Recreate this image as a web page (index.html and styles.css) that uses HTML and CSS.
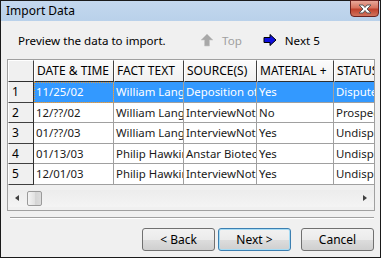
FILE: index.html
```html
<!DOCTYPE html>
<html lang="en">
<head>
    <meta charset="UTF-8">
    <title>Import Data</title>
    <link rel="stylesheet" href="styles.css">
</head>
<body>

<div class="window">
    <div class="titlebar">
        <span class="title">Import Data</span>
        <span class="close">
            <svg width="16" height="10" viewBox="0 0 16 10">
                <path d="M2 1 L6 1 L8 3.5 L10 1 L14 1 L10 5 L14 9 L10 9 L8 6.5 L6 9 L2 9 L6 5 Z" fill="#fff" stroke="#5a5a5a" stroke-width="1"/>
            </svg>
        </span>
    </div>

    <div class="content">
        <div class="toolbar">
            <span class="hint">Preview the data to import.</span>
            <span class="nav nav-off">
                <svg width="14" height="14" viewBox="0 0 14 14">
                    <path d="M7 1 L13 7 L9.5 7 L9.5 13 L4.5 13 L4.5 7 L1 7 Z" fill="#a8a8a8" stroke="#c8c8c8" stroke-width="0.6"/>
                </svg>
                Top
            </span>
            <span class="nav">
                <svg width="14" height="12" viewBox="0 0 14 12">
                    <path d="M1 3.5 L7 3.5 L7 0.5 L13 6 L7 11.5 L7 8.5 L1 8.5 Z" fill="#1010e0" stroke="#000" stroke-width="1"/>
                </svg>
                Next 5
            </span>
        </div>

        <div class="grid">
            <div class="table">
                <div class="hcell corner"></div>
                <div class="hcell">DATE &amp; TIME</div>
                <div class="hcell">FACT TEXT</div>
                <div class="hcell">SOURCE(S)</div>
                <div class="hcell">MATERIAL +</div>
                <div class="hcell">STATUS</div>

                <div class="rcell">1</div>
                <div class="cell sel focus">11/25/02</div>
                <div class="cell sel">William Langley</div>
                <div class="cell sel">Deposition of</div>
                <div class="cell sel">Yes</div>
                <div class="cell sel">Disputed</div>

                <div class="rcell">2</div>
                <div class="cell">12/??/02</div>
                <div class="cell">William Langley</div>
                <div class="cell">InterviewNotes</div>
                <div class="cell">No</div>
                <div class="cell">Prospective</div>

                <div class="rcell">3</div>
                <div class="cell">01/??/03</div>
                <div class="cell">William Langley</div>
                <div class="cell">InterviewNotes</div>
                <div class="cell">Yes</div>
                <div class="cell">Undisputed</div>

                <div class="rcell">4</div>
                <div class="cell">01/13/03</div>
                <div class="cell">Philip Hawking</div>
                <div class="cell">Anstar Biotech</div>
                <div class="cell">Yes</div>
                <div class="cell">Undisputed</div>

                <div class="rcell">5</div>
                <div class="cell">12/01/03</div>
                <div class="cell">Philip Hawking</div>
                <div class="cell">InterviewNotes</div>
                <div class="cell">Yes</div>
                <div class="cell">Undisputed</div>
            </div>

            <div class="hscroll">
                <span class="arrow arrow-left"></span>
                <span class="thumb"></span>
                <span class="track"></span>
                <span class="arrow arrow-right"></span>
            </div>
        </div>

        <div class="sep"></div>

        <div class="buttons">
            <button class="btn">&lt; Back</button>
            <button class="btn btn-default">Next &gt;</button>
            <button class="btn btn-cancel">Cancel</button>
        </div>
    </div>
</div>

</body>
</html>
```

FILE: styles.css
```css
body {
    margin: 0;
    font-family: 'Noto Sans', 'Open Sans', sans-serif;
    font-size: 11.4px;
    color: #000;
    background: #fff;
}
.window {
    width: 381px;
    height: 258px;
    box-sizing: border-box;
    border: 1px solid #1a1a1a;
    background: #f0f0f0;
    display: flex;
    flex-direction: column;
}
.titlebar {
    height: 20px;
    background: linear-gradient(#c4d8ee, #b9d1ea);
    display: flex;
    align-items: center;
    justify-content: space-between;
    padding-left: 5px;
    position: relative;
}
.title {
    font-size: 12px;
    color: #000;
    margin-top: -1px;
}
.close {
    position: absolute;
    right: 1px;
    top: -1px;
    width: 29px;
    height: 17px;
    box-sizing: border-box;
    border: 1px solid #6b2320;
    border-radius: 0 0 4px 4px;
    background: linear-gradient(#e8a89a, #d7735f 45%, #c0412c 55%, #d0745e);
    display: flex;
    align-items: center;
    justify-content: center;
}
.content {
    flex: 1;
    padding: 0 5px 0 6px;
    display: flex;
    flex-direction: column;
}
.toolbar {
    height: 38px;
    display: flex;
    align-items: center;
    font-size: 11.6px;
}
.hint {
    margin-left: 11px;
    width: 182px;
}
.nav {
    display: inline-flex;
    align-items: center;
    gap: 8px;
    margin-right: 21px;
}
.nav-off {
    color: #a0a0a0;
}
.grid {
    height: 152px;
    box-sizing: border-box;
    border: 1px solid #a0a0a0;
    background: #f0f0f0;
    overflow: hidden;
    display: flex;
    flex-direction: column;
}
.table {
    display: grid;
    grid-template-columns: 26px 80px 70px 73px 77px 80px;
    grid-template-rows: 22px repeat(5, 20.6px);
    width: 406px;
    background: #fff;
}
.hcell, .rcell, .cell {
    box-sizing: border-box;
    white-space: nowrap;
    overflow: hidden;
    padding-left: 2px;
    line-height: 19px;
}
.hcell {
    font-size: 12px;
    background: linear-gradient(#fbfbfb, #f0f0f0);
    border-top: 1px solid #fff;
    border-left: 1px solid #fff;
    border-right: 1px solid #404040;
    border-bottom: 1px solid #303030;
}
.corner {
    background: #f0f0f0;
}
.rcell {
    font-size: 12px;
    background: #f0f0f0;
    border-left: 1px solid #fff;
    border-right: 1px solid #303030;
    border-bottom: 1px solid #404040;
    padding-left: 3px;
}
.cell {
    color: #1a1a1a;
    border-right: 1px solid #a0a0a0;
    border-bottom: 1px solid #a0a0a0;
}
.sel {
    background: #3399ff;
    color: #fff;
}
.focus {
    outline: 1px dotted #e09a3c;
    outline-offset: -1px;
}
.hscroll {
    margin-top: 5px;
    height: 17px;
    display: flex;
    align-items: center;
    background: linear-gradient(#ececec, #f4f4f4);
}
.arrow {
    width: 0;
    height: 0;
    border-top: 3px solid transparent;
    border-bottom: 3px solid transparent;
}
.arrow-left {
    margin-left: 7px;
    border-right: 4px solid #404040;
}
.arrow-right {
    margin-right: 7px;
    border-left: 4px solid #404040;
}
.thumb {
    margin-left: 8px;
    width: 15px;
    height: 15px;
    box-sizing: border-box;
    border: 1px solid #9a9a9a;
    border-radius: 2px;
    background: linear-gradient(90deg, #f4f4f4, #e2e2e2 50%, #d4d4d4 51%, #dcdcdc);
}
.track {
    flex: 1;
}
.sep {
    margin: 6px 1px 0 3px;
    border-top: 1px solid #a0a0a0;
    border-bottom: 1px solid #fff;
}
.buttons {
    display: flex;
    justify-content: flex-end;
    padding-top: 9px;
    padding-right: 1px;
}
.btn {
    font-family: 'Noto Sans', 'Open Sans', sans-serif;
    font-size: 12px;
    width: 73px;
    height: 23px;
    margin-left: 3px;
    border: 1px solid #707070;
    border-radius: 3px;
    background: linear-gradient(#f2f2f2, #ebebeb 50%, #dddddd 51%, #cfcfcf);
    color: #000;
    padding: 0;
}
.btn-default {
    border-color: #3c7fb1;
    box-shadow: inset 0 0 0 1px #a6dcf5;
}
.btn-cancel {
    margin-left: 10px;
}
```
